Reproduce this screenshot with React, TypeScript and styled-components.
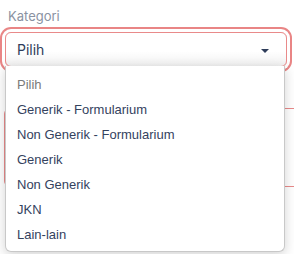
import styled, { createGlobalStyle } from 'styled-components';

const GlobalStyle = createGlobalStyle`
  html, body {
    margin: 0;
    padding: 0;
    background: #fff;
    overflow: hidden;
  }
`;

const OPTIONS = [
  'Pilih',
  'Generik - Formularium',
  'Non Generik - Formularium',
  'Generik',
  'Non Generik',
  'JKN',
  'Lain-lain',
];

const Page = styled.div`
  position: relative;
  width: 294px;
  height: 254px;
  padding: 7px 0 0 5px;
  box-sizing: border-box;
  overflow: hidden;
`;

const Field = styled.div`
  display: flex;
  flex-direction: column;
`;

const Label = styled.label`
  font-family: Inter, 'Noto Sans', sans-serif;
  font-size: 13px;
  line-height: 18px;
  color: #8a92a2;
  padding-left: 3px;
  margin-bottom: 7px;
`;

const SelectBox = styled.div`
  position: relative;
  height: 35px;
  width: 282px;
  box-sizing: border-box;
  border: 1px solid #e98a8a;
  border-radius: 6px;
  background: linear-gradient(#fff 55%, #f1f1f1);
  box-shadow: 0 0 0 3px #fff, 0 0 0 5px #e98585;
  display: flex;
  align-items: center;
  justify-content: space-between;
  padding: 0 17px 0 11px;
  font-family: Inter, 'Noto Sans', sans-serif;
  font-size: 14px;
  color: #2e3d5a;
`;

const Caret = styled.span`
  width: 0;
  height: 0;
  border-left: 4px solid transparent;
  border-right: 4px solid transparent;
  border-top: 4px solid #2e3d5a;
  margin-top: 2px;
`;

const NextBox = styled.div`
  margin-top: 41px;
  margin-left: -1px;
  width: 290px;
  height: 79px;
  box-sizing: border-box;
  border: 1px solid #e98a8a;
  border-right: none;
  border-radius: 6px 0 0 6px;
`;

const Menu = styled.ul`
  position: absolute;
  top: 66px;
  left: 5px;
  width: 280px;
  margin: 0;
  padding: 6px 0 4px;
  list-style: none;
  box-sizing: border-box;
  background: #fff;
  border: 1px solid #c8c8c8;
  border-top: none;
  border-radius: 0 0 6px 6px;
  box-shadow: 0 3px 12px rgba(0, 0, 0, 0.18);
`;

const Item = styled.li<{ $placeholder?: boolean }>`
  height: 25px;
  line-height: 25px;
  padding-left: 11px;
  font-family: 'Liberation Sans', Arial, sans-serif;
  font-size: 13px;
  color: ${(p) => (p.$placeholder ? '#7a7a7a' : '#34425e')};
  white-space: nowrap;
`;

const App = () => {
  return (
    <>
      <GlobalStyle />
      <Page>
        <Field>
          <Label>Kategori</Label>
          <SelectBox>
            <span>Pilih</span>
            <Caret />
          </SelectBox>
        </Field>
        <NextBox />
        <Menu>
          {OPTIONS.map((o, i) => (
            <Item key={o} $placeholder={i === 0}>
              {o}
            </Item>
          ))}
        </Menu>
      </Page>
    </>
  );
};

export default App;
